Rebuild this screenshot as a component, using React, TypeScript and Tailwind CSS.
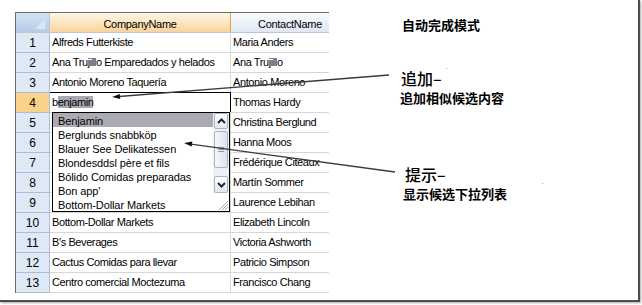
import React from "react";

const rows = [
  { n: 1, company: "Alfreds Futterkiste", contact: "Maria Anders" },
  { n: 2, company: "Ana Trujillo Emparedados y helados", contact: "Ana Trujillo" },
  { n: 3, company: "Antonio Moreno Taquería", contact: "Antonio Moreno" },
  { n: 4, company: "benjamin", contact: "Thomas Hardy", editing: true },
  // rows 5-9 sit under the suggestion list
  { n: 5, company: "", contact: "Christina Berglund" },
  { n: 6, company: "", contact: "Hanna Moos" },
  { n: 7, company: "", contact: "Frédérique Citeaux" },
  { n: 8, company: "", contact: "Martín Sommer" },
  { n: 9, company: "", contact: "Laurence Lebihan" },
  { n: 10, company: "Bottom-Dollar Markets", contact: "Elizabeth Lincoln" },
  { n: 11, company: "B's Beverages", contact: "Victoria Ashworth" },
  { n: 12, company: "Cactus Comidas para llevar", contact: "Patricio Simpson" },
  { n: 13, company: "Centro comercial Moctezuma", contact: "Francisco Chang" },
];

const suggestions = [
  "Benjamin",
  "Berglunds snabbköp",
  "Blauer See Delikatessen",
  "Blondesddsl père et fils",
  "Bólido Comidas preparadas",
  "Bon app'",
  "Bottom-Dollar Markets",
];

const gridFont = { fontFamily: '"Liberation Sans", Arial, sans-serif' };
const cjkFont = { fontFamily: '"Noto Sans CJK SC", "Noto Sans", sans-serif' };

// dropdown shown under the edited cell
const SuggestList = () => {
  return (
    <div className="absolute left-[36px] top-[99px] w-[178px] h-[100px] border border-black bg-white flex">
      <div className="w-[160px] flex flex-col">
        {suggestions.map((s, i) => (
          <div
            key={s}
            className={`h-[14px] leading-[16px] pl-[5px] text-[11px] tracking-[-0.1px] overflow-hidden whitespace-nowrap ${
              i === 0 ? "bg-[#ababb3]" : ""
            }`}
          >
            {s}
          </div>
        ))}
      </div>
      <div className="w-[16px] flex flex-col bg-[#eef0f3]">
        <div className="h-[16px] mx-px rounded-[2px] border border-[#a9b4c6] bg-gradient-to-b from-white to-[#e3e8ef] flex items-center justify-center">
          <svg width="9" height="6" viewBox="0 0 9 6">
            <polyline points="1,5 4.5,1.5 8,5" fill="none" stroke="#1d2a3c" strokeWidth="2" />
          </svg>
        </div>
        <div className="h-[2px]" />
        <div className="h-[37px] mx-px rounded-[2px] border border-[#a9b4c6] bg-gradient-to-r from-[#f7f8fa] to-[#dde3ec] flex flex-col items-center justify-center gap-[1px]">
          <div className="w-[6px] h-px bg-[#8c97a8]" />
          <div className="w-[6px] h-px bg-[#8c97a8]" />
          <div className="w-[6px] h-px bg-[#8c97a8]" />
        </div>
        <div className="h-[8px]" />
        <div className="h-[17px] mx-px rounded-[2px] border border-[#a9b4c6] bg-gradient-to-b from-white to-[#e3e8ef] flex items-center justify-center">
          <svg width="9" height="6" viewBox="0 0 9 6">
            <polyline points="1,1 4.5,4.5 8,1" fill="none" stroke="#1d2a3c" strokeWidth="2" />
          </svg>
        </div>
        <div className="h-[18px] bg-white flex items-end justify-end">
          <svg width="12" height="12" viewBox="0 0 12 12">
            <line x1="11" y1="2" x2="2" y2="11" stroke="#a3a3a3" />
            <line x1="11" y1="5" x2="5" y2="11" stroke="#a3a3a3" />
            <line x1="11" y1="8" x2="8" y2="11" stroke="#a3a3a3" />
          </svg>
        </div>
      </div>
    </div>
  );
};

const Grid = () => {
  return (
    <div
      className="relative ml-[15px] mt-[12px] w-[314px] border-t border-l border-[#6e6e6e] text-black"
      style={gridFont}
    >
      {/* header */}
      <div className="flex h-[20px] border-b border-[#b7c7dd]">
        <div className="relative w-[34px] border-r border-[#b3c4dc] bg-gradient-to-b from-[#d4e2f4] to-[#b6cbe8]">
          <svg className="absolute left-0 top-0" width="33" height="19" viewBox="0 0 33 19">
            <polygon points="29,6 29,16 19,16" fill="#dce5f1" />
          </svg>
        </div>
        <div className="w-[181px] border-r border-[#f0a03e] bg-gradient-to-b from-[#fff6e6] to-[#f9d49b] text-center text-[11px] tracking-[-0.3px] leading-[22px] overflow-hidden">
          CompanyName
        </div>
        <div className="w-[98px] bg-gradient-to-b from-[#fafcfe] to-[#dfe8f4] text-right pr-[7px] text-[11px] tracking-[-0.3px] leading-[22px] overflow-hidden">
          ContactName
        </div>
      </div>
      {/* rows */}
      {rows.map((r) => (
        <div key={r.n} className="flex h-[20px] border-b border-[#d6d6d6]">
          <div
            className={`w-[34px] -mb-px border-r border-b border-[#a9bdd7] text-center text-[12px] leading-[20px] ${
              r.editing ? "bg-[#fbd28c]" : "bg-[#dfe8f5]"
            }`}
          >
            {r.n}
          </div>
          <div className="relative w-[181px] border-r border-[#d6d6d6] pl-[2px] text-[11px] tracking-[-0.4px] leading-[18px] whitespace-nowrap">
            {r.editing ? (
              <>
                <div className="absolute -top-px left-0 -right-px bottom-0 border-t border-r border-black" />
                <span>b</span>
                <span className="bg-[#a9a9b1]">enjamin</span>
              </>
            ) : (
              r.company
            )}
          </div>
          <div className="w-[98px] pl-[2px] text-[11px] tracking-[-0.4px] leading-[18px] whitespace-nowrap overflow-hidden">
            {r.contact}
          </div>
        </div>
      ))}
      <SuggestList />
    </div>
  );
};

const Notes = () => {
  return (
    <div className="flex flex-col text-black" style={cjkFont}>
      <p className="mt-[18px] ml-[73px] text-[13px] font-bold leading-[13px]">自动完成模式</p>
      <p className="mt-[39px] ml-[72px] text-[16px] font-medium leading-[16px]">追加–</p>
      <p className="mt-[5px] ml-[71px] text-[13px] font-bold leading-[13px]">追加相似候选内容</p>
      <p className="mt-[62px] ml-[76px] text-[16px] font-medium leading-[16px]">提示–</p>
      <p className="mt-[5px] ml-[74px] text-[13px] font-bold leading-[13px]">显示候选下拉列表</p>
    </div>
  );
};

export default function App() {
  return (
    <div className="relative w-[642px] h-[305px] bg-white overflow-hidden">
      <div className="flex items-start w-[640px] h-[302px] border-r-2 border-b-2 border-[#4d4d4d] shadow-[1px_1px_2px_rgba(0,0,0,0.35)]">
        <Grid />
        <Notes />
      </div>
      {/* callout arrows */}
      <svg className="absolute left-0 top-0 pointer-events-none" width="642" height="305">
        <line x1="389" y1="75" x2="119" y2="96.5" stroke="#3a3a3a" strokeWidth="1.3" />
        <polygon points="112,97 120.2,98.9 119.8,93.9" fill="#111" />
        <line x1="395" y1="172" x2="191" y2="144.2" stroke="#3a3a3a" strokeWidth="1.3" />
        <polygon points="184,143 191.6,146.6 192.3,141.6" fill="#111" />
        <rect x="446" y="68" width="1" height="1" fill="#3cc8e8" />
        <rect x="542" y="183" width="1" height="1" fill="#3cc8e8" />
      </svg>
    </div>
  );
}
